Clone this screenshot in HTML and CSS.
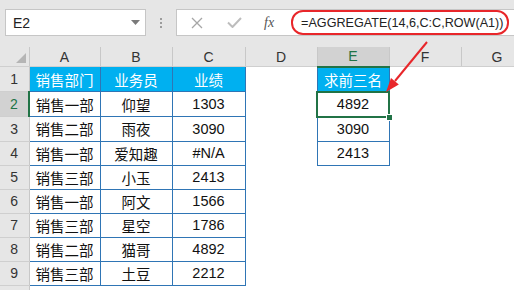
FILE: index.html
```html
<!DOCTYPE html>
<html lang="zh">
  <head>
    <meta charset="UTF-8" />
    <title>AGGREGATE 求前三名</title>
    <link rel="stylesheet" href="styles.css">
  </head>
  <body>
    <div class="fbar">
      <div class="namebox">
        <span>E2</span>
        <svg class="drop" width="9" height="5" viewBox="0 0 9 5"><polygon points="0,0 9,0 4.5,5" fill="#7a7a7a"/></svg>
      </div>
      <div class="dots"><i></i><i></i><i></i></div>
      <div class="fbox">
        <svg class="ico-x" width="12" height="12" viewBox="0 0 12 12"><path d="M1 1 L11 11 M11 1 L1 11" stroke="#a6a6a6" stroke-width="1.3" fill="none"/></svg>
        <svg class="ico-ok" width="15" height="11" viewBox="0 0 15 11"><path d="M1 5.5 L5.5 10 L14 1" stroke="#bdbdbd" stroke-width="2" fill="none"/></svg>
        <span class="fx">fx</span>
        <span class="formula">=AGGREGATE(14,6,C:C,ROW(A1))</span>
      </div>
    </div>

    <table class="sheet">
      <colgroup>
        <col class="c-rh"><col class="c-a"><col class="c-b"><col class="c-c">
        <col class="c-n"><col class="c-n"><col class="c-n"><col class="c-n">
      </colgroup>
      <thead>
        <tr>
          <th class="corner"><svg width="10" height="10" viewBox="0 0 10 10"><polygon points="10,0 10,10 0,10" fill="#b5b5b5"/></svg></th>
          <th>A</th><th>B</th><th>C</th><th>D</th><th class="on">E</th><th>F</th><th>G</th>
        </tr>
      </thead>
      <tbody>
        <tr><th class="rh">1</th><td class="b hd">销售部门</td><td class="b hd">业务员</td><td class="b hd">业绩</td><td></td><td class="b hd">求前三名</td><td></td><td></td></tr>
        <tr><th class="rh on">2</th><td class="b">销售一部</td><td class="b">仰望</td><td class="b">1303</td><td></td><td class="b sel">4892</td><td></td><td></td></tr>
        <tr><th class="rh">3</th><td class="b">销售二部</td><td class="b">雨夜</td><td class="b">3090</td><td></td><td class="b">3090</td><td></td><td></td></tr>
        <tr><th class="rh">4</th><td class="b">销售一部</td><td class="b">爱知趣</td><td class="b">#N/A</td><td></td><td class="b">2413</td><td></td><td></td></tr>
        <tr><th class="rh">5</th><td class="b">销售三部</td><td class="b">小玉</td><td class="b">2413</td><td></td><td></td><td></td><td></td></tr>
        <tr><th class="rh">6</th><td class="b">销售一部</td><td class="b">阿文</td><td class="b">1566</td><td></td><td></td><td></td><td></td></tr>
        <tr><th class="rh">7</th><td class="b">销售三部</td><td class="b">星空</td><td class="b">1786</td><td></td><td></td><td></td><td></td></tr>
        <tr><th class="rh">8</th><td class="b">销售二部</td><td class="b">猫哥</td><td class="b">4892</td><td></td><td></td><td></td><td></td></tr>
        <tr><th class="rh">9</th><td class="b">销售三部</td><td class="b">土豆</td><td class="b">2212</td><td></td><td></td><td></td><td></td></tr>
        <tr><th class="rh"></th><td></td><td></td><td></td><td></td><td></td><td></td><td></td></tr>
      </tbody>
    </table>

    <!-- red pointer from the formula to the selected cell -->
    <svg class="arrow" width="514" height="290" viewBox="0 0 514 290">
      <line x1="427" y1="42" x2="395" y2="81" stroke="#e8262a" stroke-width="2"/>
      <polygon points="386,92 398.8,84.4 391,78" fill="#e8262a"/>
    </svg>
  </body>
</html>
```

FILE: styles.css
```css
body {
  margin: 0;
  width: 514px;
  height: 290px;
  overflow: hidden;
  position: relative;
  background-color: #fff;
  font-family: "Liberation Sans", "Noto Sans CJK SC", sans-serif;
  color: #111;
}

/* formula bar */
.fbar {
  height: 47px;
  box-sizing: border-box;
  padding: 9px 0 0 5px;
  background-color: #e6e6e6;
  display: flex;
  align-items: flex-start;
}
.namebox {
  width: 141px;
  height: 27px;
  box-sizing: border-box;
  border: 1px solid #c6c6c6;
  background-color: #fff;
  display: flex;
  align-items: center;
  justify-content: space-between;
  padding: 0 5px 0 7px;
  font-size: 14px;
  color: #222;
}
.dots {
  width: 30px;
  height: 27px;
  display: flex;
  flex-direction: column;
  align-items: center;
  justify-content: center;
  gap: 2px;
}
.dots i {
  width: 2px;
  height: 2px;
  background-color: #9c9c9c;
}
.fbox {
  flex: 1;
  height: 27px;
  box-sizing: border-box;
  border: 1px solid #c6c6c6;
  border-right: none;
  background-color: #fff;
  display: flex;
  align-items: center;
}
.ico-x {
  margin-left: 14px;
}
.ico-ok {
  margin-left: 24px;
}
.fx {
  margin-left: 22px;
  font-family: "Liberation Serif", serif;
  font-style: italic;
  font-size: 14px;
  color: #555;
}
.formula {
  margin-left: 17px;
  height: 25px;
  width: 218px;
  box-sizing: border-box;
  border: 2px solid #e8262a;
  border-radius: 12px;
  padding-left: 8px;
  display: flex;
  align-items: center;
  font-size: 12.6px;
  color: #222;
  white-space: nowrap;
}

/* sheet grid */
.sheet {
  border-collapse: collapse;
  table-layout: fixed;
  width: 533px;
}
.c-rh { width: 29px; }
.c-a { width: 71px; }
.c-b { width: 72px; }
.c-c { width: 73px; }
.c-n { width: 72px; }

.sheet th {
  padding: 0;
  font-weight: normal;
  font-size: 14px;
  color: #333;
  background-color: #e6e6e6;
  border-right: 1px solid #c8c8c8;
  border-bottom: 1px solid #cfcfcf;
}
.sheet thead th {
  height: 16px;
}
.sheet .corner {
  text-align: right;
  vertical-align: bottom;
  line-height: 0;
  padding: 0 3px 3px 0;
}
.sheet th.on {
  background-color: #d2d2d2;
  color: #217346;
}
.sheet thead th.on {
  border-bottom: 2px solid #217346;
}
.sheet .rh.on {
  border-right: 2px solid #217346;
}
.sheet td {
  padding: 0;
  height: 23px;
  font-size: 14.5px;
  text-align: center;
  vertical-align: middle;
  white-space: nowrap;
}
.sheet td.b {
  border: 1px solid #2f75b5;
}
.sheet td.hd {
  background-color: #00b0f0;
  color: #fff;
}
.sheet td.sel {
  border: 2px solid #217346;
  position: relative;
}
.sheet td.sel::after {
  content: "";
  position: absolute;
  right: -5px;
  bottom: -5px;
  width: 5px;
  height: 5px;
  background-color: #217346;
  border: 1px solid #fff;
}

.arrow {
  position: absolute;
  left: 0;
  top: 0;
  pointer-events: none;
}
```
